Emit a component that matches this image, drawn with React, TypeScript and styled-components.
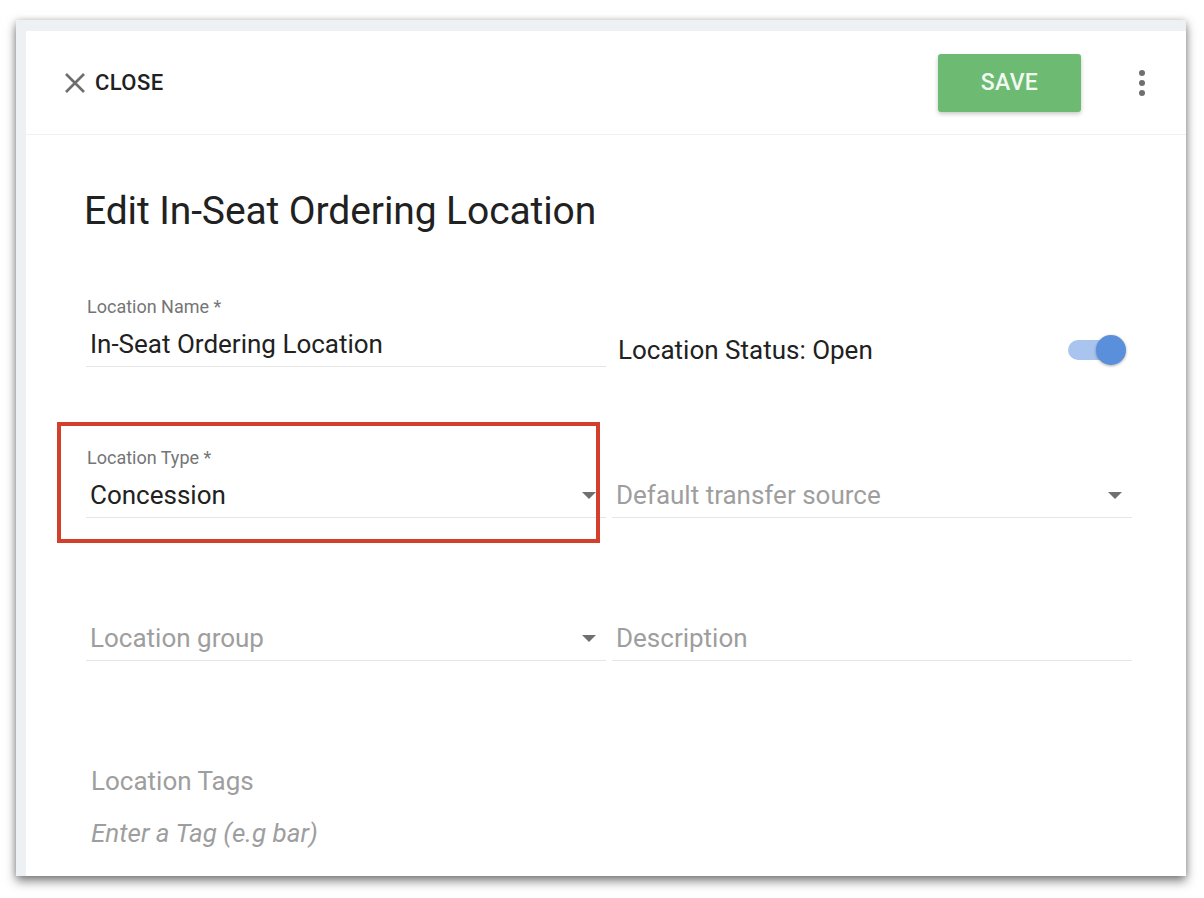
import type { FC } from 'react';
import styled, { createGlobalStyle } from 'styled-components';

const GlobalStyle = createGlobalStyle`
  html, body {
    margin: 0;
    padding: 0;
    background: #ffffff;
  }
  body {
    min-height: 898px;
    font-family: Roboto, "Liberation Sans", Arial, sans-serif;
    color: #212121;
  }
  #root {
    padding: 20px 0 22px 16px;
  }
`;

const Frame = styled.div`
  width: 1170px;
  height: 856px;
  box-sizing: border-box;
  padding: 11px 0 0 10px;
  background: #eef1f3;
  box-shadow: 0 5px 10px rgba(0, 0, 0, 0.5), 0 0 6px rgba(0, 0, 0, 0.15);
  overflow: hidden;
`;

const Sheet = styled.div`
  height: 100%;
  background: #ffffff;
  display: flex;
  flex-direction: column;
`;

const Header = styled.header`
  height: 104px;
  flex: none;
  box-sizing: border-box;
  border-bottom: 1px solid #f0f0f0;
  display: flex;
  align-items: center;
  padding: 0 32px 0 38px;
`;

const CloseButton = styled.button`
  display: flex;
  align-items: center;
  gap: 9px;
  border: 0;
  background: none;
  padding: 0;
  font-family: inherit;
  font-size: 22px;
  font-weight: 500;
  letter-spacing: 0.4px;
  color: #212121;
  cursor: pointer;
`;

const Spacer = styled.div`
  flex: 1;
`;

const SaveButton = styled.button`
  width: 143px;
  height: 58px;
  border: 0;
  border-radius: 3px;
  background: #6dba73;
  color: #f1f9f1;
  font-family: inherit;
  font-size: 23px;
  font-weight: 500;
  letter-spacing: 0.3px;
  box-shadow: 0 2px 4px rgba(0, 0, 0, 0.22);
  cursor: pointer;
`;

const MenuButton = styled.button`
  width: 24px;
  height: 40px;
  margin-left: 49px;
  border: 0;
  background: none;
  padding: 0;
  display: flex;
  flex-direction: column;
  align-items: center;
  justify-content: center;
  gap: 4px;
`;

const Dot = styled.span`
  width: 6px;
  height: 6px;
  border-radius: 50%;
  background: #6f6f6f;
`;

const Body = styled.div`
  padding: 53px 0 0 58px;
`;

const Title = styled.h1`
  margin: 0;
  font-size: 39px;
  line-height: 46px;
  font-weight: 400;
  letter-spacing: -0.1px;
  color: #212121;
`;

const Grid = styled.div<{ $top: number }>`
  display: grid;
  grid-template-columns: 520px 520px;
  column-gap: 6px;
  margin: ${(p) => p.$top}px 0 0 2px;
  align-items: end;
`;

const FieldWrap = styled.div`
  position: relative;
`;

const Label = styled.div`
  font-size: 18px;
  line-height: 22px;
  color: #757575;
  padding-left: 1px;
`;

const InputBox = styled.div<{ $labelled?: boolean }>`
  display: flex;
  align-items: center;
  padding: ${(p) => (p.$labelled ? '10px' : '0')} 10px 6px 4px;
  border-bottom: 1px solid #e6e6e6;
`;

const Value = styled.div<{ $placeholder?: boolean }>`
  flex: 1;
  font-size: 26px;
  line-height: 32px;
  color: ${(p) => (p.$placeholder ? '#9e9e9e' : '#212121')};
  white-space: nowrap;
`;

const Caret = styled.span`
  width: 0;
  height: 0;
  border-left: 7px solid transparent;
  border-right: 7px solid transparent;
  border-top: 7px solid #707070;
`;

const Highlight = styled.div`
  position: absolute;
  left: -29px;
  top: -25px;
  width: 543px;
  height: 121px;
  box-sizing: border-box;
  border: 4px solid #d2402b;
  pointer-events: none;
`;

const StatusRow = styled.div`
  display: flex;
  align-items: center;
  justify-content: space-between;
  padding: 0 8px 1px 6px;
`;

const StatusText = styled.span`
  font-size: 26px;
  line-height: 32px;
  color: #212121;
`;

const Track = styled.div`
  position: relative;
  width: 48px;
  height: 20px;
  border-radius: 10px;
  background: #a9c5ef;
  margin-right: 8px;
`;

const Thumb = styled.div`
  position: absolute;
  right: -10px;
  top: -5px;
  width: 30px;
  height: 30px;
  border-radius: 50%;
  background: #5a8fdc;
  box-shadow: 0 1px 3px rgba(0, 0, 0, 0.35);
`;

const Tags = styled.div`
  margin: 104px 0 0 7px;
`;

const TagsTitle = styled.div`
  font-size: 26px;
  line-height: 32px;
  color: #9e9e9e;
`;

const TagsInput = styled.div`
  margin-top: 20px;
  font-size: 26px;
  line-height: 32px;
  font-style: italic;
  color: #9e9e9e;
`;

const CloseIcon: FC = () => (
  <svg width="22" height="22" viewBox="0 0 22 22">
    <path d="M2 2L20 20M20 2L2 20" stroke="#6e6e6e" strokeWidth="2.6" />
  </svg>
);

interface FieldProps {
  label?: string;
  value: string;
  placeholder?: boolean;
  select?: boolean;
}

const Field: FC<FieldProps> = ({ label, value, placeholder, select }) => (
  <div>
    {label && <Label>{label}</Label>}
    <InputBox $labelled={!!label}>
      <Value $placeholder={placeholder}>{value}</Value>
      {select && <Caret />}
    </InputBox>
  </div>
);

const App: FC = () => (
  <>
    <GlobalStyle />
    <Frame>
      <Sheet>
        <Header>
          <CloseButton>
            <CloseIcon />
            CLOSE
          </CloseButton>
          <Spacer />
          <SaveButton>SAVE</SaveButton>
          <MenuButton aria-label="More">
            <Dot />
            <Dot />
            <Dot />
          </MenuButton>
        </Header>
        <Body>
          <Title>Edit In-Seat Ordering Location</Title>
          <Grid $top={62}>
            <Field label="Location Name *" value="In-Seat Ordering Location" />
            <StatusRow>
              <StatusText>Location Status: Open</StatusText>
              <Track>
                <Thumb />
              </Track>
            </StatusRow>
          </Grid>
          <Grid $top={80}>
            <FieldWrap>
              <Field label="Location Type *" value="Concession" select />
              <Highlight />
            </FieldWrap>
            <Field value="Default transfer source" placeholder select />
          </Grid>
          <Grid $top={104}>
            <Field value="Location group" placeholder select />
            <Field value="Description" placeholder />
          </Grid>
          <Tags>
            <TagsTitle>Location Tags</TagsTitle>
            <TagsInput>Enter a Tag (e.g bar)</TagsInput>
          </Tags>
        </Body>
      </Sheet>
    </Frame>
  </>
);

export default App;
